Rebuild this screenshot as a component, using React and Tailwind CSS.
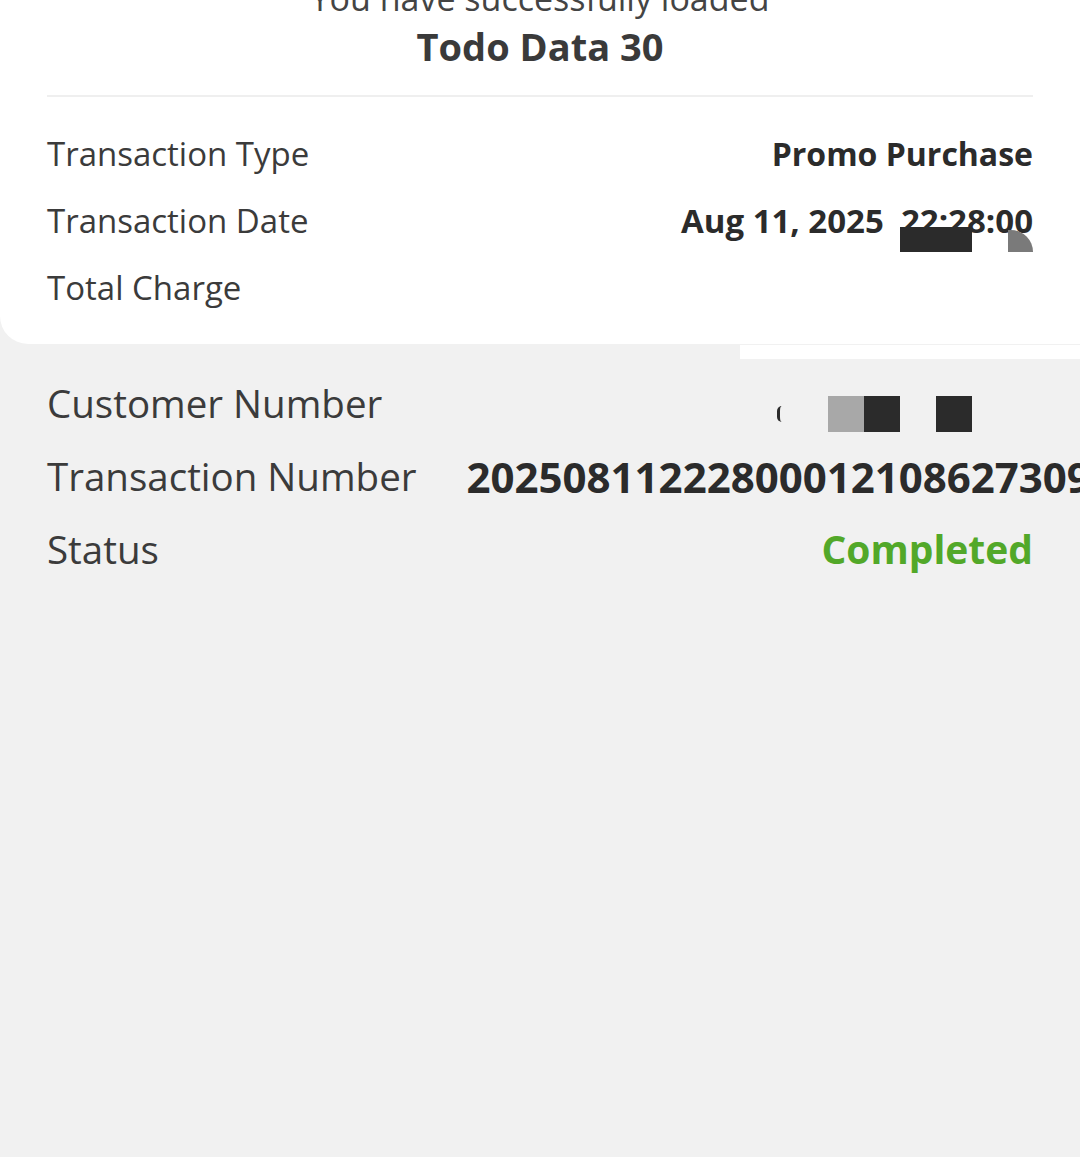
import React from 'react';

const font = { fontFamily: '"Open Sans", "Liberation Sans", sans-serif' };

const TopRow = ({ label, children }) => (
  <div className="flex h-[67px] items-center justify-between">
    <span className="text-[33px] text-[#3b3b3b]">{label}</span>
    {children}
  </div>
);

const BottomRow = ({ label, gap = 'gap-[42px]', children }) => (
  <div className={`flex h-[73px] items-center ${gap}`}>
    <span className="shrink-0 text-[38.5px] text-[#3b3b3b]">{label}</span>
    <div className="ml-auto flex shrink-0 items-center">{children}</div>
  </div>
);

export default function App() {
  return (
    <div className="relative h-[1157px] w-full overflow-hidden bg-[#f1f1f1]" style={font}>
      {/* receipt card */}
      <div className="rounded-bl-[28px] bg-white px-[47px] pb-[23px]">
        <div className="-mt-[22px] text-center text-[34px] leading-[40px] text-[#444]">
          You have successfully loaded
        </div>
        <div className="mt-[5px] text-center text-[38px] font-bold leading-[46px] text-[#3a3a3a]">
          Todo Data 30
        </div>
        <div className="mt-[26px] h-[2px] bg-[#efefef]" />
        <div className="pt-[23px]">
          <TopRow label="Transaction Type">
            <span className="text-[32px] font-bold text-[#2b2b2b]">Promo Purchase</span>
          </TopRow>
          <TopRow label="Transaction Date">
            <span className="relative whitespace-pre text-[33px] font-bold text-[#2b2b2b]">
              {'Aug 11, 2025  22:28:00'}
              <span className="absolute right-[61px] top-[31px] h-[25px] w-[72px] bg-[#2b2b2b]" />
              <span className="absolute right-0 top-[34px] h-[22px] w-[25px] rounded-tr-full bg-[#7a7a7a]" />
            </span>
          </TopRow>
          <TopRow label="Total Charge" />
        </div>
      </div>
      <div className="absolute left-[740px] top-[345px] h-[14px] w-[340px] bg-white" />

      {/* details */}
      <div className="mt-[23px] px-[47px]">
        <BottomRow label="Customer Number">
          <div className="flex translate-y-[10px] items-center">
            <span className="mr-[46px] h-[16px] w-[5px] rounded-l-full border-l-[3px] border-[#2b2b2b]" />
            <span className="h-[36px] w-[36px] bg-[#a8a8a8]" />
            <span className="h-[36px] w-[36px] bg-[#2b2b2b]" />
            <span className="ml-[36px] h-[36px] w-[36px] bg-[#2b2b2b]" />
            <span className="w-[61px]" />
          </div>
        </BottomRow>
        <BottomRow label="Transaction Number" gap="gap-[50px]">
          <span className="text-[42px] font-bold text-[#2b2b2b]">20250811222800012108627309</span>
        </BottomRow>
        <BottomRow label="Status">
          <span className="text-[39px] font-bold text-[#52a829]">Completed</span>
        </BottomRow>
      </div>
    </div>
  );
}
